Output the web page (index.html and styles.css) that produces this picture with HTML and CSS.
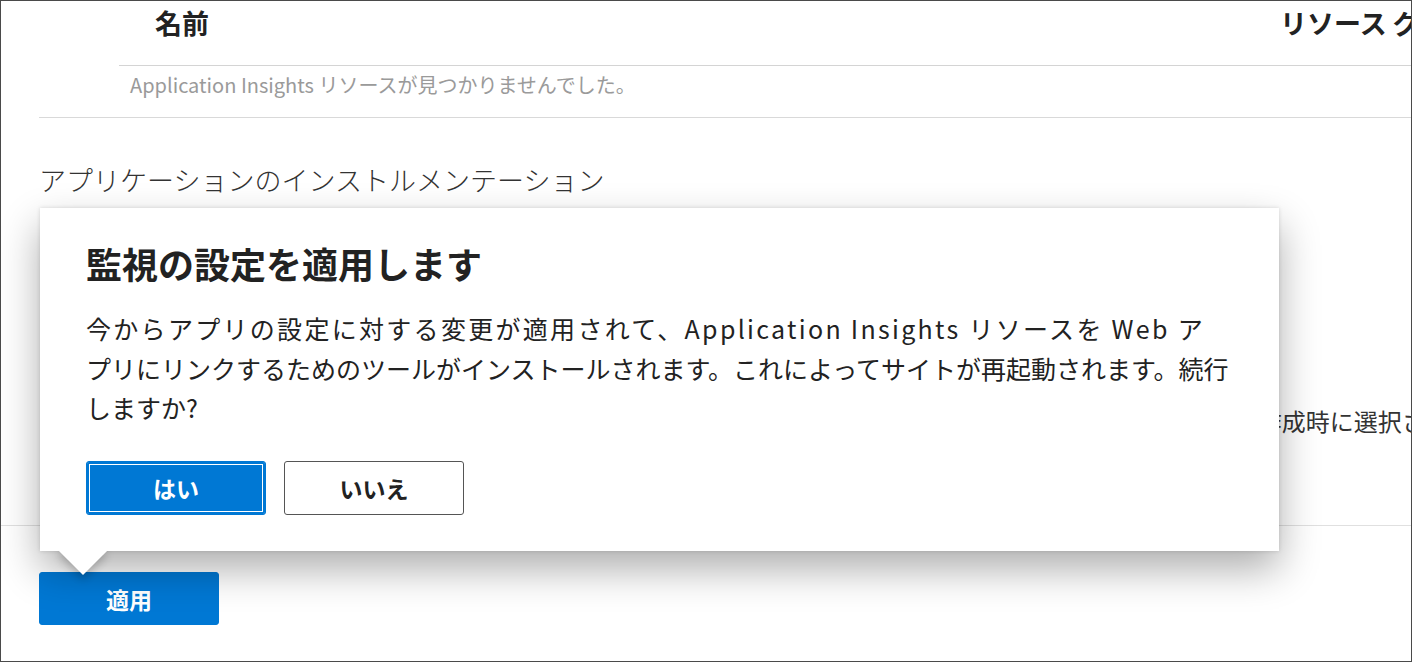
FILE: index.html
```html
<!DOCTYPE html>
<html lang="ja">
<head>
<meta charset="utf-8">
<title>監視の設定を適用します</title>
<link rel="stylesheet" href="styles.css">
</head>
<body>
<div class="frame">
  <div class="panel">
    <div class="thead">
      <div class="col-name">名前</div>
      <div class="col-rg">リソース グループ</div>
    </div>
    <div class="trow">Application Insights リソースが見つかりませんでした。</div>
  </div>
  <h2 class="section-title">アプリケーションのインストルメンテーション</h2>
  <div class="hidden-row"><span class="hidden-text">既存のリソースは作成時に選択されたオプション</span></div>
  <div class="footer">
    <button class="btn btn-primary btn-apply">適用</button>
  </div>

  <div class="dialog">
    <div class="dialog-body">
      <h1 class="dialog-title">監視の設定を適用します</h1>
      <p class="dialog-text"><span class="wide-line">今からアプリの設定に対する変更が適用されて、Application Insights リソースを Web ア</span><br>プリにリンクするためのツールがインストールされます。これによってサイトが再起動されます。続行<br>しますか?</p>
      <div class="dialog-actions">
        <button class="btn btn-primary btn-focus">はい</button>
        <button class="btn btn-default">いいえ</button>
      </div>
    </div>
  </div>
</div>
</body>
</html>
```
FILE: styles.css
```css
* { box-sizing: border-box; }
html, body { margin: 0; padding: 0; background: #fff; }
body {
  font-family: "Noto Sans CJK JP", "Noto Sans", sans-serif;
  color: #222;
}
.frame {
  position: relative;
  width: 1412px;
  height: 662px;
  border: 1px solid #4a4a4a;
  overflow: hidden;
  background: #fff;
}
.panel {
  margin-left: 38px;
  border-bottom: 1px solid #d9d9d9;
}
.thead {
  margin-left: 80px;
  height: 65px;
  display: flex;
  border-bottom: 1px solid #d4d4d4;
  font-size: 27px;
  font-weight: 700;
  line-height: 44px;
  color: #222;
  white-space: nowrap;
}
.col-name {
  width: 1161px;
  padding-left: 36px;
  flex: none;
}
.col-rg { flex: none; }
.trow {
  margin-left: 80px;
  height: 51px;
  padding-left: 11px;
  font-size: 20px;
  line-height: 38px;
  color: #9a9a9a;
}
.section-title {
  margin: 44px 0 0 38px;
  font-size: 27px;
  font-weight: 300;
  line-height: 36px;
  color: #333;
}
.hidden-row {
  margin-top: 207px;
  height: 32px;
  padding-left: 1066px;
  font-size: 24px;
  line-height: 32px;
  white-space: nowrap;
  color: #333;
}
.footer {
  margin-top: 88px;
  border-top: 1px solid #e0e0e0;
  padding: 46px 0 0 38px;
}
.btn {
  font-family: "Noto Sans CJK JP", "Noto Sans", sans-serif;
  font-size: 23px;
  font-weight: 700;
  width: 180px;
  height: 54px;
  border-radius: 3px;
  cursor: pointer;
  padding: 0;
}
.btn-primary {
  background: #0078d4;
  color: #fff;
  border: 1px solid #0078d4;
}
.btn-apply { height: 53px; }
.btn-focus {
  box-shadow: inset 0 0 0 2px #0078d4, inset 0 0 0 3px #fff;
}
.btn-default {
  background: #fff;
  color: #222;
  border: 1px solid #555;
}
.dialog {
  position: absolute;
  left: 39px;
  top: 207px;
  width: 1239px;
  height: 343px;
  box-shadow: 0 0 4px rgba(0,0,0,0.14), 0 18px 38px rgba(0,0,0,0.32);
  background: #fff;
}
.dialog::after {
  content: "";
  position: absolute;
  left: 26px;
  top: 326px;
  width: 34px;
  height: 34px;
  background: #fff;
  transform: rotate(45deg);
  box-shadow: 3px 3px 8px rgba(0,0,0,0.22);
}
.dialog-body {
  position: relative;
  z-index: 1;
  height: 100%;
  background: #fff;
  padding: 31px 40px 0 46px;
}
.dialog-title {
  margin: 0;
  font-size: 36px;
  font-weight: 700;
  line-height: 48px;
  color: #222;
}
.dialog-text {
  margin: 22px 0 0;
  font-size: 25px;
  line-height: 39.5px;
  color: #222;
  white-space: nowrap;
}
.wide-line { letter-spacing: 2.3px; }
.dialog-actions {
  margin-top: 33px;
  display: flex;
  gap: 18px;
}
```
